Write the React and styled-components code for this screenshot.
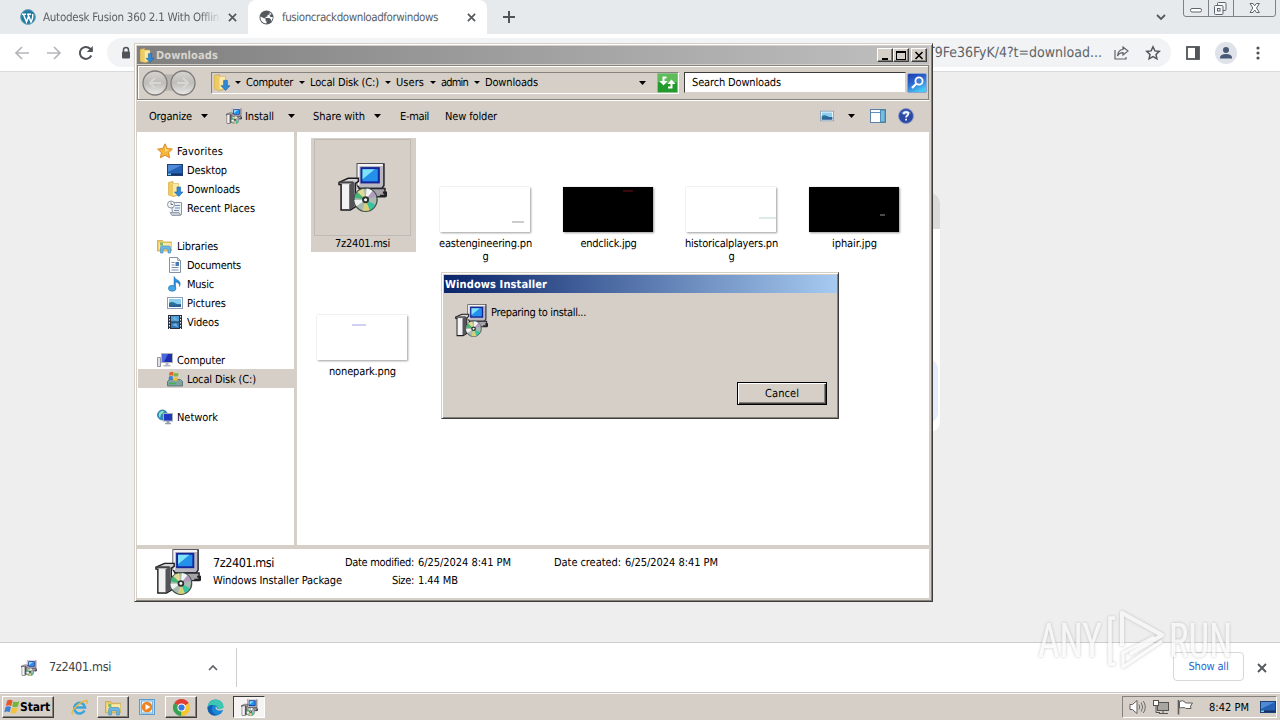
import { useLayoutEffect, useRef, useState } from "react";
import styled, { createGlobalStyle, css } from "styled-components";

const GlobalStyle = createGlobalStyle`
  * {
    box-sizing: border-box;
  }
  body {
    margin: 0;
    overflow: hidden;
    font-family: "DejaVu Sans Condensed", "DejaVu Sans", sans-serif;
    font-stretch: condensed;
    font-size: 11px;
    line-height: 13px;
    color: #000;
    text-rendering: geometricPrecision;
  }
  svg {
    display: block;
    flex: none;
  }
`;

// Tracks a label out (or in) until it is exactly w pixels wide
function Fit({ w, children }) {
  const ref = useRef(null);
  const [spacing, setSpacing] = useState(0);
  useLayoutEffect(() => {
    const natural = ref.current.getBoundingClientRect().width;
    setSpacing((w - natural) / children.length);
  }, []);
  return (
    <Word ref={ref} style={{ letterSpacing: spacing }}>
      {children}
    </Word>
  );
}

const navItems = [
  { icon: StarIcon, label: "Favorites", w: 46, top: true },
  { icon: DesktopIcon, label: "Desktop", w: 40 },
  { icon: DownloadsIcon, label: "Downloads", w: 53 },
  { icon: RecentIcon, label: "Recent Places", w: 68 },
  null,
  { icon: LibraryIcon, label: "Libraries", w: 41, top: true },
  { icon: DocumentIcon, label: "Documents", w: 54 },
  { icon: MusicIcon, label: "Music", w: 27 },
  { icon: PictureIcon, label: "Pictures", w: 39 },
  { icon: VideoIcon, label: "Videos", w: 32 },
  null,
  { icon: ComputerIcon, label: "Computer", w: 48, top: true },
  { icon: DiskIcon, label: "Local Disk (C:)", w: 69, selected: true },
  null,
  { icon: NetworkIcon, label: "Network", w: 41, top: true },
];

const crumbs = [
  ["Computer", 47],
  ["Local Disk (C:)", 69],
  ["Users", 28],
  ["admin", 27],
  ["Downloads", 53],
];

const files = [
  { lines: [["eastengineering.pn", 93], ["g", 6]], speck: "#ccc", x: 72, y: 34, w: 12 },
  { lines: [["endclick.jpg", 56]], dark: true, speck: "#3a080c", x: 60, y: 3, w: 10 },
  { lines: [["historicalplayers.pn", 93], ["g", 6]], speck: "#dcebe8", x: 73, y: 30, w: 17 },
  { lines: [["iphair.jpg", 45]], dark: true, speck: "#4a4a4a", x: 71, y: 27, w: 5 },
  { lines: [["nonepark.png", 67]], speck: "#d0d0f4", x: 35, y: 9, w: 14 },
];

export default function App() {
  return (
    <Screen>
      <GlobalStyle />
      <TabStrip />
      <BrowserBar />
      <PageArea>
        <Card>
          <CardHead />
          <CardHighlight />
        </Card>
      </PageArea>
      <DownloadShelf />
      <Taskbar />
      <Explorer />
      <InstallerDialog />
      <Watermark />
    </Screen>
  );
}

function TabStrip() {
  return (
    <Tabs>
      <Tab>
        <WordpressIcon />
        <TabTitle $w={178} $fade>
          <Fit w={176}>Autodesk Fusion 360 2.1 With Offlin</Fit>
        </TabTitle>
        <Cross size={9} />
      </Tab>
      <Tab $active>
        <GlobeIcon />
        <TabTitle $w={177}>
          <Fit w={156}>fusioncrackdownloadforwindows</Fit>
        </TabTitle>
        <Cross size={9} />
      </Tab>
      <NewTab>
        <svg width="12" height="12" viewBox="0 0 12 12" stroke="#505357" strokeWidth="2">
          <path d="M6 0v12M0 6h12" />
        </svg>
      </NewTab>
      <TabSearch>
        <svg width="10" height="7" viewBox="0 0 10 7" fill="none" stroke="#55595d" strokeWidth="1.8">
          <path d="M1 1l4 4 4-4" />
        </svg>
      </TabSearch>
      <WindowControls>
        <svg width="93" height="17" viewBox="0 0 93 17" fill="none" stroke="#7c8288">
          <path d="M.5 0v14q0 2.500 2.500 2.500h87q2.500 0 2.500-2.500V0M25.500 0v16M50.500 0v16" />
          <rect x="7.500" y="8.500" width="11" height="3.500" rx="1.500" fill="#fff" stroke="#5b6670" />
          <g fill="#f6f7f8" stroke="#5b6670">
            <rect x="34.500" y="2.500" width="8.500" height="8" rx="1" />
            <rect x="31.500" y="5.500" width="8.500" height="9" rx="1" />
            <rect x="34.500" y="8.500" width="2.500" height="2.500" />
          </g>
          <path d="M67 3.500h3l1.700 2.300 1.700-2.300h3L73.500 8l2.900 4.500h-3l-1.700-2.500-1.700 2.500h-3L69.800 8z" fill="#fff" stroke="#5b6670" />
        </svg>
      </WindowControls>
    </Tabs>
  );
}

function BrowserBar() {
  return (
    <Bar>
      <svg width="16" height="14" viewBox="0 0 16 14" fill="none" stroke="#b4b6b9" strokeWidth="1.700">
        <path d="M15 7H2M8 1L2 7l6 6" />
      </svg>
      <svg width="16" height="14" viewBox="0 0 16 14" fill="none" stroke="#b4b6b9" strokeWidth="1.700">
        <path d="M1 7h13M8 1l6 6-6 6" />
      </svg>
      <svg width="16" height="16" viewBox="0 0 16 16" fill="none" stroke="#505357" strokeWidth="2">
        <path d="M13.300 10.500A6 6 0 1 1 12.200 3.700L14 5.500" />
        <path d="M14.800 1v6h-6z" fill="#505357" stroke="none" />
      </svg>
      <Omnibox>
        <svg width="10" height="14" viewBox="0 0 10 14">
          <path d="M2.500 6V4a2.500 2.500 0 0 1 5 0v2" fill="none" stroke="#505357" strokeWidth="1.500" />
          <rect x="1" y="5.500" width="8" height="7" rx="1" fill="#505357" />
        </svg>
        <Url>
          <Fit w={175}>T9Fe36FyK/4?t=download...</Fit>
        </Url>
        <svg width="15" height="14" viewBox="0 0 15 14" fill="none" stroke="#606468" strokeWidth="1.200">
          <path d="M1 4v9h11v-2M9 1l5 4-5 4V6.700C6 6.700 4.500 8 3.500 10 3.800 6 5.500 3.800 9 3.500z" />
        </svg>
        <svg width="16" height="16" viewBox="0 0 16 16" fill="none" stroke="#55595d" strokeWidth="1.500">
          <path d="M8 1.800l1.900 4.100 4.400.5-3.300 3 .9 4.400L8 11.600l-3.900 2.200.9-4.400-3.300-3 4.400-.5z" />
        </svg>
      </Omnibox>
      <svg width="14" height="14" viewBox="0 0 14 14">
        <rect x="1" y="1" width="12" height="12" fill="none" stroke="#505357" strokeWidth="1.800" />
        <rect x="9" y="1" width="4" height="12" fill="#505357" />
      </svg>
      <svg width="22" height="22" viewBox="0 0 22 22">
        <circle cx="11" cy="11" r="11" fill="#dfe2e8" />
        <circle cx="11" cy="8" r="3" fill="#4a5878" />
        <path d="M5 16.500v-1.500q1-3 6-3t6 3v1.500z" fill="#4a5878" />
      </svg>
      <MoreButton>
        <svg width="4" height="14" viewBox="0 0 4 14" fill="#505357">
          <circle cx="2" cy="2" r="1.600" />
          <circle cx="2" cy="7" r="1.600" />
          <circle cx="2" cy="12" r="1.600" />
        </svg>
      </MoreButton>
    </Bar>
  );
}

function Explorer() {
  return (
    <ExplorerFrame>
      <TitleBar>
        <DownloadsIcon size={15} />
        <Title>
          <Fit w={62}>Downloads</Fit>
        </Title>
        <TitleButton>
          <svg width="10" height="9" viewBox="0 0 10 9">
            <path d="M2 7h6v2H2z" />
          </svg>
        </TitleButton>
        <TitleButton>
          <svg width="10" height="9" viewBox="0 0 10 9">
            <path fillRule="evenodd" d="M0 0h10v9H0zM1 2h8v6H1z" />
          </svg>
        </TitleButton>
        <TitleButton $gap={2}>
          <svg width="10" height="9" viewBox="0 0 10 9" stroke="#000" strokeWidth="1.600">
            <path d="M1.500 1l7 7M8.500 1l-7 7" />
          </svg>
        </TitleButton>
      </TitleBar>
      <AddressRow>
        <RoundButtons />
        <AddressBox>
          <DownloadsIcon size={17} />
          {crumbs.map(([name, w]) => (
            <Crumb key={name}>
              <Caret small />
              <Fit w={w}>{name}</Fit>
            </Crumb>
          ))}
          <AddressEnd>
            <Caret />
            <RefreshIcon />
          </AddressEnd>
        </AddressBox>
        <SearchBox>
          <Fit w={89}>Search Downloads</Fit>
        </SearchBox>
        <svg width="20" height="20" viewBox="0 0 20 20">
          <defs>
            <linearGradient id="find" x1="0" y1="0" x2=".5" y2="1">
              <stop offset="0" stopColor="#1c39ad" />
              <stop offset=".5" stopColor="#2c66cf" />
              <stop offset="1" stopColor="#48c8f4" />
            </linearGradient>
          </defs>
          <rect x=".5" y=".5" width="19" height="19" rx="1.500" fill="url(#find)" stroke="#8aa6d0" />
          <circle cx="12" cy="8" r="3.600" fill="#3f7bd8" stroke="#fff" strokeWidth="1.800" />
          <path d="M9.300 10.700L5 15" stroke="#fff" strokeWidth="2.200" />
        </svg>
      </AddressRow>
      <CommandBar>
        <Command>
          <Fit w={43}>Organize</Fit>
          <Caret />
        </Command>
        <Command $ml={18}>
          <MsiIcon size={16} />
          <InstallLabel>
            <Fit w={29}>Install</Fit>
          </InstallLabel>
          <Caret />
        </Command>
        <Command $ml={18}>
          <Fit w={52}>Share with</Fit>
          <Caret />
        </Command>
        <Command $ml={19}>
          <Fit w={29}>E-mail</Fit>
        </Command>
        <Command $ml={16}>
          <Fit w={52}>New folder</Fit>
        </Command>
        <ViewTools>
          <PictureIcon size={14} />
          <Caret />
          <svg width="16" height="14" viewBox="0 0 16 14">
            <rect x=".5" y=".5" width="15" height="13" fill="#fff" stroke="#5d82a8" />
            <path d="M1 3.500h10" stroke="#5f8fc4" />
            <rect x="10.500" y="1" width="4.500" height="12" fill="#74bfdf" stroke="#3e7ca8" strokeWidth=".8" />
          </svg>
          <svg width="16" height="16" viewBox="0 0 16 16">
            <circle cx="8" cy="8" r="7.500" fill="#2b49a6" stroke="#8d99c4" />
            <path d="M3 5q5-5 10 0-5 3-10 0z" fill="#7f9ce0" />
            <path d="M5.800 6.200q0-2.200 2.300-2.200t2.200 2q0 1-1.200 1.700-1 .6-1 1.800M8.100 10.800v1.700" fill="none" stroke="#fff" strokeWidth="1.700" />
          </svg>
        </ViewTools>
      </CommandBar>
      <Panes>
        <NavPane>
          {navItems.map((item, i) =>
            item ? (
              <NavRow key={i} $top={item.top} $selected={item.selected}>
                <item.icon size={16} />
                <Fit w={item.w}>{item.label}</Fit>
              </NavRow>
            ) : (
              <NavRow key={i} />
            )
          )}
        </NavPane>
        <FileGrid>
          <FileCell $selected>
            <IconFrame>
              <MsiIcon size={49} />
            </IconFrame>
            <Fit w={55}>7z2401.msi</Fit>
          </FileCell>
          {files.map((file) => (
            <FileCell key={file.lines[0][0]}>
              <ThumbSlot>
                <Thumb $dark={file.dark}>
                  <svg width="90" height="45">
                    <rect x={file.x} y={file.y} width={file.w} height="2" fill={file.speck} />
                  </svg>
                </Thumb>
              </ThumbSlot>
              {file.lines.map(([text, w]) => (
                <Fit key={text} w={w}>
                  {text}
                </Fit>
              ))}
            </FileCell>
          ))}
        </FileGrid>
      </Panes>
      <DetailsPane>
        <DetailsIcon>
          <MsiIcon size={46} />
        </DetailsIcon>
        <DetailsGrid>
          <FileName>
            <Fit w={61}>7z2401.msi</Fit>
          </FileName>
          <Key>
            <Fit w={69}>Date modified:</Fit>
          </Key>
          <Fit w={93}>6/25/2024 8:41 PM</Fit>
          <Key>
            <Fit w={67}>Date created:</Fit>
          </Key>
          <Fit w={93}>6/25/2024 8:41 PM</Fit>
          <Fit w={129}>Windows Installer Package</Fit>
          <Key>
            <Fit w={22}>Size:</Fit>
          </Key>
          <Fit w={40}>1.44 MB</Fit>
        </DetailsGrid>
      </DetailsPane>
    </ExplorerFrame>
  );
}

function InstallerDialog() {
  return (
    <DialogFrame>
      <DialogTitle>
        <Fit w={102}>Windows Installer</Fit>
      </DialogTitle>
      <DialogBody>
        <MsiIcon size={33} />
        <Fit w={95}>Preparing to install...</Fit>
      </DialogBody>
      <CancelButton>
        <Fit w={34}>Cancel</Fit>
      </CancelButton>
    </DialogFrame>
  );
}

function DownloadShelf() {
  return (
    <Shelf>
      <ShelfItem>
        <MsiIcon size={16} />
        <ShelfName>
          <Fit w={62}>7z2401.msi</Fit>
        </ShelfName>
        <svg width="10" height="7" viewBox="0 0 10 7" fill="none" stroke="#606468" strokeWidth="1.700">
          <path d="M1 6l4-4 4 4" />
        </svg>
      </ShelfItem>
      <ShowAll>
        <Fit w={40}>Show all</Fit>
      </ShowAll>
      <Cross size={10} />
    </Shelf>
  );
}

function Taskbar() {
  return (
    <Task>
      <StartButton>
        <WindowsFlag size={16} />
        <Fit w={30}>Start</Fit>
      </StartButton>
      <TaskButton $ml={9}>
        <svg width="17" height="17" viewBox="0 0 17 17" fill="none">
          <path d="M13.500 11.500A5.400 5.400 0 1 1 14 8.500H5" stroke="#3aa5dc" strokeWidth="2.600" />
          <path d="M1.500 15.500C-1 12 9 2.500 15.500 1.500c1.500.2 1 2 0 3.500" stroke="#e8b83c" strokeWidth="1.300" />
        </svg>
      </TaskButton>
      <TaskButton $ml={2} $raised>
        <LibraryIcon size={17} />
      </TaskButton>
      <TaskButton $ml={2}>
        <svg width="16" height="16" viewBox="0 0 16 16">
          <rect x=".5" y=".5" width="15" height="15" fill="#bfe0f5" stroke="#5b9acb" />
          <rect x="2.500" y="2" width="11" height="12" fill="#e4f3fb" stroke="#7ab4dc" />
          <circle cx="8" cy="8" r="5.200" fill="#f0821e" />
          <path d="M6.500 5l5 3-5 3z" fill="#fff" />
        </svg>
      </TaskButton>
      <TaskButton $ml={2} $raised>
        <ChromeIcon />
      </TaskButton>
      <TaskButton $ml={2}>
        <svg width="17" height="17" viewBox="0 0 17 17">
          <circle cx="8.500" cy="8.500" r="8" fill="#1a86d8" />
          <path d="M.5 8.500C1.500-1.500 16-1.500 16.500 7.500c0 3-4 4-6.500 2.500 1-1 .5-4-3-4-3 0-6 1-6.500 2.500z" fill="#3cc7b0" />
          <path d="M6.500 6.500c-3.500 3.500-1 9 4.500 9.500C4 18 0 13 .6 8.500 2 6 5 5.500 6.500 6.500z" fill="#155fae" />
          <path d="M9 7.500c-1.500 3 1.500 5 6.500 3.500l1 1 .5-3.500-3 1.500c-3 .8-4.500 0-4-1z" fill="#d5cec7" />
        </svg>
      </TaskButton>
      <TaskButton $ml={2} $pressed>
        <MsiIcon size={17} />
      </TaskButton>
      <Tray>
        <svg width="17" height="16" viewBox="0 0 17 16" fill="none" stroke="#6f6c69">
          <path d="M1 5.500h2.500L8 1.500v13l-4.500-4H1z" fill="#fff" stroke="#5f5d5b" />
          <path d="M10 5.500q1.500 2.500 0 5M12.200 3.500q3 4.500 0 9M14.300 2q4 6 0 12" />
        </svg>
        <svg width="17" height="16" viewBox="0 0 17 16" fill="#fff" stroke="#55524f">
          <rect x="4.500" y="3.500" width="11" height="8" fill="#a9a5a0" />
          <path d="M6 14.500h9M10 12v2" />
          <path d="M1.500 1v4h3v-4M3 5v8.500h4" fill="none" />
          <rect x=".5" y="1.500" width="5" height="5" />
        </svg>
        <svg width="17" height="16" viewBox="0 0 17 16" fill="#fff" stroke="#5f5d5b">
          <path d="M1.500 1v14.500" strokeWidth="1.600" />
          <path d="M2.500 2.500q3-1.500 5 0 0 1.500 2 1.500h6l-2 3 .5 2.500h-5q-.5-1.500-6.500-.5z" />
        </svg>
        <Clock>
          <Fit w={40}>8:42 PM</Fit>
        </Clock>
        <DesktopIcon size={16} />
      </Tray>
    </Task>
  );
}

function Watermark() {
  return (
    <Brand>
      <svg width="200" height="66" viewBox="0 0 200 66">
        <defs>
          <filter id="soft" x="-10%" y="-10%" width="120%" height="120%">
            <feDropShadow dx="0" dy="0" stdDeviation="1.600" floodColor="#777" floodOpacity=".65" />
          </filter>
        </defs>
        <g filter="url(#soft)" fill="#fff" fillOpacity=".85" fontFamily="Roboto, sans-serif" fontSize="48">
          <text x="3" y="50" textLength="64" lengthAdjust="spacingAndGlyphs">
            ANY
          </text>
          <text x="134" y="50" textLength="63" lengthAdjust="spacingAndGlyphs">
            RUN
          </text>
          <g fill="none" stroke="#fff" strokeOpacity=".85" strokeWidth="4" strokeLinejoin="round">
            <path d="M87 39V6l40 22-32 19" />
            <path d="M80 11h-5v46h5" strokeWidth="3.500" />
            <path d="M127 34L88 60V46l31-16" strokeWidth="3" />
          </g>
        </g>
      </svg>
    </Brand>
  );
}

/* ---------- icons ---------- */

function Cross({ size }) {
  return (
    <svg width={size} height={size} viewBox="0 0 10 10" stroke="#55595d" strokeWidth="1.900">
      <path d="M1 1l8 8M9 1L1 9" />
    </svg>
  );
}

function Caret({ small }) {
  return (
    <svg width={small ? 6 : 7} height={small ? 3 : 4} viewBox="0 0 8 4" preserveAspectRatio="none">
      <path d="M0 0h8L4 4z" />
    </svg>
  );
}

function RefreshIcon() {
  return (
    <svg width="21" height="20" viewBox="0 0 21 20">
      <rect x=".5" y=".5" width="20" height="19" rx="1" fill="#249a2c" stroke="#8cc08c" />
      <path d="M1 1h19v8Q10 12 1 9z" fill="#5dbb5a" />
      <path d="M9.500 4.500H6.500V9" fill="none" stroke="#fff" strokeWidth="2" />
      <path d="M2.500 8h8l-4 4.500z" fill="#fff" />
      <path d="M11 14.500h3.500V10" fill="none" stroke="#fff" strokeWidth="2" />
      <path d="M10.500 11h8l-4-4.500z" fill="#fff" />
    </svg>
  );
}

function WordpressIcon() {
  return (
    <svg width="16" height="16" viewBox="0 0 16 16">
      <circle cx="8" cy="8" r="7.400" fill="#2379a0" stroke="#6aa5c0" />
      <path d="M2 5.200h4M7 5.200h4M3.500 5.500l3 7.500 2-5.500M8 5.500l3 7.500q2.500-5 1.500-8" fill="none" stroke="#fff" strokeWidth="1.500" />
    </svg>
  );
}

function GlobeIcon() {
  return (
    <svg width="15" height="15" viewBox="0 0 15 15">
      <circle cx="7.500" cy="7.500" r="7" fill="#55595d" />
      <path d="M1.500 6.500l3 1.500 2 .5v2l1 1v2C4 13.500 1 10.500 1.500 6.500zM8.500 1.600l2.500.6-.5 2.300-2 .5v1.500L6.500 7v1h4l1.500 1.500v2q2-2 1.700-4.500L11.500 7l-1-1.500L12.500 4Q11 2 8.500 1.600z" fill="#fff" />
    </svg>
  );
}

function MsiIcon({ size }) {
  return (
    <svg width={size} height={size} viewBox="0 0 48 48">
      <path d="M19 1h26v21l-2 3H21l-2-3z" fill="#b9b7c0" stroke="#25242c" strokeWidth="1.500" />
      <path d="M19 1h25v2H21v19h-2z" fill="#f4f4f6" />
      <path d="M22 4h19v16H22z" fill="#16269a" />
      <path d="M24 6h15v12H24z" fill="#2390ec" />
      <path d="M24 6h12L24 16z" fill="#7fe2f8" />
      <path d="M21 25h25v8H24z" fill="#a5a2a8" stroke="#25242c" strokeWidth="1.500" />
      <path d="M44 29h3v3h-6" fill="none" stroke="#222" strokeWidth="2" />
      <path d="M1 19l9-4h10v3l-3 2v23l-5 3H3V21H1z" fill="#d6d3d6" stroke="#1d1c20" strokeWidth="1.500" />
      <path d="M4 21h7v24H4z" fill="#f3f2f2" />
      <path d="M11 21l5-3v25l-5 3z" fill="#55535a" />
      <path d="M1 19h14" stroke="#444" strokeWidth="2" />
      <circle cx="27" cy="36" r="11.300" fill="#a9bab0" stroke="#3f5247" strokeWidth="1.300" />
      <path d="M27 36l-8-7.500a11 11 0 0 1 6-3.200z" fill="#e3da92" />
      <path d="M27 36L16.200 34a11 11 0 0 1 2.800-5.500z" fill="#45b678" />
      <path d="M27 36l1-11a11 11 0 0 1 6 2.500z" fill="#f2f5f4" />
      <path d="M27 36l7-8.500a11 11 0 0 1 3.500 5z" fill="#b39abf" />
      <path d="M27 36l9.500 5a11 11 0 0 1-5.500 5.200z" fill="#38c2a0" />
      <path d="M27 36l4 10.200a11 11 0 0 1-7 .3z" fill="#d9d07a" />
      <path d="M27 36l-9 6.300a11 11 0 0 1-2-6z" fill="#f0f2f2" />
      <circle cx="27" cy="36" r="3.400" fill="#2d3430" />
      <circle cx="27" cy="36" r="1.500" fill="#fff" />
    </svg>
  );
}

function StarIcon({ size }) {
  return (
    <svg width={size} height={size} viewBox="0 0 16 16">
      <path d="M8 .8l2.200 4.700 5.200.6-3.800 3.500 1 5.200L8 12.200l-4.600 2.600 1-5.200L.6 6.100l5.200-.6z" fill="#f9b53a" stroke="#d98a25" />
      <path d="M8 3l1.400 3.400 3 .4L8 9z" fill="#fddc85" />
    </svg>
  );
}

function DesktopIcon({ size }) {
  return (
    <svg width={size} height={size} viewBox="0 0 16 16">
      <rect x=".5" y="2.500" width="15" height="11" fill="#2460b4" stroke="#1c3f78" />
      <path d="M1 3h14L1 10z" fill="#4f8ad6" />
      <path d="M1 11.500h14V13H1z" fill="#16315f" />
      <path d="M1 11.500h3V13H1z" fill="#6fd0e8" />
    </svg>
  );
}

function DownloadsIcon({ size }) {
  return (
    <svg width={size} height={size} viewBox="0 0 16 16">
      <path d="M1.500 1.500L6 .5v2h5.500V14l-5 1.500-5-1.500z" fill="#f4d777" stroke="#cda548" strokeWidth=".8" />
      <path d="M6 2.500h5.500V14H6z" fill="#fbe9a5" />
      <path d="M1.500 1.500L6 3v12.300L1.500 14z" fill="#eecb62" />
      <path d="M10 6h3.500v5H16l-4.200 4.500L7.500 11H10z" fill="#2f8ad8" stroke="#1c62ac" strokeWidth=".6" />
    </svg>
  );
}

function RecentIcon({ size }) {
  return (
    <svg width={size} height={size} viewBox="0 0 16 16">
      <path d="M4.500 2.500h10v12h-9z" fill="#eef1f4" stroke="#8c96a2" />
      <path d="M3 12.500h9l1.500 3H5z" fill="#c6ccd4" stroke="#848e9a" strokeWidth=".8" />
      <path d="M8 5.500h5M8 8h5M7 10.500h5" stroke="#6d90b8" />
      <circle cx="4" cy="4.500" r="3.500" fill="#f4f6f8" stroke="#8c96a2" />
      <path d="M4 2.500v2h2" stroke="#555" fill="none" strokeWidth=".8" />
    </svg>
  );
}

function LibraryIcon({ size }) {
  return (
    <svg width={size} height={size} viewBox="0 0 16 16">
      <path d="M.5 2.500h5l1 1.500h8v9H.5z" fill="#f0cf6c" stroke="#c9a347" strokeWidth=".8" />
      <path d="M2 5h12.500v6H2z" fill="#fbe8a2" />
      <path d="M3 4.500h3v3H3z" fill="#80b96a" />
      <path d="M3.500 15V9.500q0-1.500 1.500-1.500h7q1.500 0 1.500 1.500V15H11v-4H6v4z" fill="#6bb8e4" stroke="#4a93c0" strokeWidth=".7" />
    </svg>
  );
}

function DocumentIcon({ size }) {
  return (
    <svg width={size} height={size} viewBox="0 0 16 16">
      <path d="M2.500.5h8l3 3v12h-11z" fill="#fff" stroke="#8493a4" />
      <path d="M10.500.5v3h3z" fill="#cfdae6" stroke="#8493a4" strokeWidth=".7" />
      <path d="M4.500 5.500h3M4.500 8h3M4.500 10.500h7M4.500 13h7" stroke="#7391b4" />
      <path d="M8.500 5h3.500v4H8.500z" fill="#4a78b4" />
    </svg>
  );
}

function MusicIcon({ size }) {
  return (
    <svg width={size} height={size} viewBox="0 0 16 16">
      <path d="M7 .5q1 2.500 4 3.700 3.500 2 1.500 6.300.5-3.500-4-4.500v6.500H7z" fill="#2f8fd6" stroke="#1e6fb4" strokeWidth=".5" />
      <ellipse cx="5.200" cy="12.300" rx="3.800" ry="3" fill="#43a5e4" stroke="#1e6fb4" strokeWidth=".6" />
    </svg>
  );
}

function PictureIcon({ size }) {
  return (
    <svg width={size} height={size} viewBox="0 0 16 16">
      <rect x=".5" y="2.500" width="15" height="11" fill="#fff" stroke="#8aa0b6" />
      <rect x="2" y="4" width="12" height="8" fill="#8ccdf0" />
      <path d="M2 8q3-2 6 0t6 1v3H2z" fill="#2a7391" />
      <path d="M2 10.500l12-1V12H2z" fill="#2f5c9c" />
    </svg>
  );
}

function VideoIcon({ size }) {
  return (
    <svg width={size} height={size} viewBox="0 0 16 16">
      <rect x="1" y="1" width="14" height="14" fill="#29323c" />
      <path d="M4 2h8v5.500H4z" fill="#4ea0d8" />
      <path d="M4 8.500h8V14H4z" fill="#3378b8" />
      <path d="M5 5l3-2 3 4zM5 11l4-2 2 4z" fill="#6db4de" />
      <path d="M2.500 2v13M13.500 2v13" stroke="#f2f2f2" strokeDasharray="1.500 1.500" />
    </svg>
  );
}

function ComputerIcon({ size }) {
  return (
    <svg width={size} height={size} viewBox="0 0 16 16">
      <path d="M.5 5.500h3v9h-3z" fill="#dfe2e6" stroke="#7a828c" strokeWidth=".8" />
      <rect x="4.500" y="1.500" width="11" height="9" fill="#1e2fb0" stroke="#b0b4bc" />
      <path d="M5 2h6l-4 8H5z" fill="#4a66e0" />
      <path d="M8.500 11h3v2h2v1.500h-7V13h2z" fill="#b4b8c0" />
    </svg>
  );
}

function DiskIcon({ size }) {
  return (
    <svg width={size} height={size} viewBox="0 0 16 16">
      <path d="M.5 10.500l2-2h11l2 2v4.500H.5z" fill="#7fa39e" stroke="#4c6a6c" strokeWidth=".8" />
      <path d="M2 12.500h7" stroke="#3fb552" strokeWidth="1.500" />
      <path d="M2.500 1.500q2.500-1.500 4 0L6 4.800q-2-1-4 0z" fill="#e2602c" />
      <path d="M7 1.800q2 1 4.500 0L11 5q-2 1-4.500 0z" fill="#79b83c" />
      <path d="M2 5.500q2-1 4 0L5.500 9q-2-1-4 0z" fill="#3f83d0" />
      <path d="M6.500 6q2 1 4.500 0l-.5 3.200q-2 1-4.500 0z" fill="#f2bf3a" />
    </svg>
  );
}

function NetworkIcon({ size }) {
  return (
    <svg width={size} height={size} viewBox="0 0 16 16">
      <circle cx="5.500" cy="6" r="5" fill="#2f8cb8" stroke="#2a6f96" strokeWidth=".8" />
      <path d="M2 4q3-3 5-2-1 3-3 3.500L3 9Q1 7 2 4z" fill="#8fe0c8" />
      <rect x="6.500" y="4.500" width="9" height="7.500" fill="#2338c0" stroke="#a8aeb8" />
      <path d="M9.500 12h3v2h1.500v1.200h-6V14h1.500z" fill="#9a9fb0" />
    </svg>
  );
}

function WindowsFlag({ size }) {
  return (
    <svg width={size} height={size} viewBox="0 0 15 15">
      <path d="M3 1.500q2.500-1.800 5 0L6.800 6.500q-2.300-1.500-5 0z" fill="#e2582a" />
      <path d="M8.800 2q2.500 1.600 5.500 0L13 7q-2.800 1.500-5.300 0z" fill="#74b53a" />
      <path d="M1.500 7.500q2.500-1.600 5 0l-1.200 5q-2.300-1.500-5 0z" fill="#3c80d4" />
      <path d="M7.400 8q2.500 1.500 5.400 0l-1.300 5q-2.700 1.500-5.300 0z" fill="#f4c238" />
    </svg>
  );
}

function ChromeIcon() {
  return (
    <svg width="17" height="17" viewBox="0 0 18 18">
      <path d="M9 9L1.200 4.500a9 9 0 0 1 15.600 0z" fill="#df4033" />
      <path d="M9 9v9A9 9 0 0 1 1.200 4.500z" fill="#35a34f" />
      <path d="M9 9l7.800-4.500A9 9 0 0 1 9 18z" fill="#f8c52c" />
      <circle cx="9" cy="9" r="4.300" fill="#fff" />
      <circle cx="9" cy="9" r="3.300" fill="#3a78e0" />
    </svg>
  );
}

function RoundButtons() {
  return (
    <svg width="56" height="28" viewBox="0 0 56 28">
      <defs>
        <linearGradient id="orb" x1="0" y1="0" x2="0" y2="1">
          <stop offset="0" stopColor="#d6d4d1" />
          <stop offset=".5" stopColor="#bfbdba" />
          <stop offset="1" stopColor="#eceae8" />
        </linearGradient>
      </defs>
      <path d="M14 3q14 5 28 0v21q-14-5-28 0z" fill="#b6b3af" />
      <circle cx="14" cy="14" r="12" fill="url(#orb)" stroke="#7e7c7a" strokeWidth="1.300" />
      <circle cx="42" cy="14" r="12" fill="url(#orb)" stroke="#7e7c7a" strokeWidth="1.300" />
      <g fill="none" stroke="#d8d6d3" strokeWidth="2">
        <path d="M20 14H9M14 9l-5 5 5 5M36 14h11M42 9l5 5-5 5" />
      </g>
    </svg>
  );
}

/* ---------- styles ---------- */

const face = "#d5cfc8";

const Word = styled.span`
  display: inline-block;
  flex: none;
  white-space: pre;
`;

const Screen = styled.div`
  position: relative;
  display: flex;
  flex-direction: column;
  width: 1280px;
  height: 720px;
  overflow: hidden;
  background-color: #eee;
`;

const Tabs = styled.div`
  display: flex;
  height: 34px;
  background-color: #e7eaed;
`;

const Tab = styled.div`
  display: flex;
  align-items: center;
  gap: ${({ $active }) => ($active ? 8 : 7)}px;
  width: ${({ $active }) => ($active ? 239 : 248)}px;
  padding-left: ${({ $active }) => ($active ? 11 : 20)}px;
  border-radius: 8px 8px 0 0;
  background-color: ${({ $active }) => ($active ? "#fff" : "transparent")};
  color: #5a5e62;
`;

const TabTitle = styled.div`
  width: ${({ $w }) => $w}px;
  overflow: hidden;
  font-size: 11.5px;
  ${({ $fade }) =>
    $fade &&
    css`
      mask-image: linear-gradient(90deg, #000 88%, transparent);
    `}
`;

const NewTab = styled.div`
  display: flex;
  align-items: center;
  margin-left: 16px;
`;

const TabSearch = styled.div`
  display: flex;
  align-items: center;
  margin-left: auto;
  margin-right: 17px;
`;

const WindowControls = styled.div`
  margin-right: 4px;
`;

const Bar = styled.div`
  display: flex;
  align-items: center;
  gap: 15px;
  height: 38px;
  padding: 0 20px 0 14px;
  border-bottom: 1px solid #d9dadc;
  background-color: #fff;

  & > svg:nth-child(-n + 3) {
    margin-right: 1px;
  }
`;

const Omnibox = styled.div`
  display: flex;
  flex: 1;
  align-items: center;
  gap: 16px;
  height: 29px;
  margin-left: -3px;
  padding: 0 10px 0 14px;
  border-radius: 15px;
  background-color: #f1f3f4;
`;

const Url = styled.div`
  margin-left: auto;
  margin-right: -4px;
  font-size: 14px;
  line-height: 18px;
  color: #606468;
`;

const MoreButton = styled.div`
  margin-left: 4px;
`;

const PageArea = styled.div`
  display: flex;
  justify-content: center;
  align-items: flex-start;
  height: 570px;
  padding-top: 121px;
  background-color: #eee;
`;

const Card = styled.div`
  display: flex;
  flex-direction: column;
  width: 600px;
  height: 239px;
  border-radius: 10px;
  overflow: hidden;
  background-color: #fff;
`;

const CardHead = styled.div`
  height: 36px;
  background-color: #dadada;
`;

const CardHighlight = styled.div`
  height: 66px;
  margin: auto 2px 8px;
  border-radius: 12px;
  background-color: #e3ecfd;
`;

const Shelf = styled.div`
  display: flex;
  align-items: center;
  height: 51px;
  padding-right: 13px;
  border-top: 1px solid #cdced0;
  border-bottom: 1px solid #c8c6c4;
  background-color: #fff;
`;

const ShelfItem = styled.div`
  display: flex;
  align-items: center;
  width: 237px;
  height: 39px;
  padding: 0 18px 0 21px;
  border-right: 1px solid #cdced0;
`;

const ShelfName = styled.div`
  flex: 1;
  margin-left: 12px;
  padding-bottom: 2px;
  font-size: 12.5px;
  color: #3c4043;
`;

const ShowAll = styled.div`
  display: flex;
  align-items: center;
  justify-content: center;
  width: 71px;
  height: 29px;
  margin: 0 13px 2px auto;
  border: 1px solid #d5d7da;
  border-radius: 4px;
  color: #2468d0;
`;

const Task = styled.div`
  display: flex;
  align-items: flex-start;
  height: 27px;
  padding: 2px 3px 0 2px;
  border-top: 1px solid #fbfaf8;
  background-color: ${face};
`;

const raised = css`
  border: 1px solid;
  border-color: #fff #3f3d3b #3f3d3b #fff;
  box-shadow: inset -1px -1px 0 #85817c;
`;

const StartButton = styled.div`
  display: flex;
  align-items: center;
  gap: 0;
  width: 52px;
  height: 22px;
  padding-left: 1px;
  font-size: 12px;
  font-weight: bold;
  ${raised}
`;

const TaskButton = styled.div`
  display: flex;
  align-items: center;
  justify-content: center;
  width: 32px;
  height: 22px;
  margin-left: ${({ $ml }) => $ml}px;
  ${({ $raised }) => $raised && raised}
  ${({ $pressed }) =>
    $pressed &&
    css`
      border: 1px solid;
      border-color: #3f3d3b #fff #fff #3f3d3b;
      background-color: #f6f4f2;
    `}
`;

const Tray = styled.div`
  display: flex;
  align-items: center;
  gap: 7px;
  width: 155px;
  height: 22px;
  margin-left: auto;
  padding-left: 6px;
  border: 1px solid;
  border-color: #85817c #fff #fff #85817c;
`;

const Clock = styled.div`
  margin-left: 8px;
  margin-right: 4px;
`;

const ExplorerFrame = styled.div`
  position: absolute;
  left: 134px;
  top: 43px;
  display: flex;
  flex-direction: column;
  width: 799px;
  height: 559px;
  padding: 2px 3px 2px 1px;
  border: 1px solid;
  border-color: ${face} #3f3d3b #3f3d3b ${face};
  background-color: ${face};
  box-shadow: inset 1px 1px 0 #fff, inset -1px -1px 0 #85817c;
`;

const TitleBar = styled.div`
  display: flex;
  align-items: center;
  height: 18px;
  margin-left: 1px;
  padding: 0 2px 0 2px;
  background: linear-gradient(90deg, #808080, #c0c0c0);
`;

const Title = styled.div`
  flex: 1;
  margin-left: 2px;
  font-weight: bold;
  color: #d8d4cd;
`;

const TitleButton = styled.div`
  display: flex;
  align-items: center;
  justify-content: center;
  width: 16px;
  height: 14px;
  margin-left: ${({ $gap }) => $gap || 0}px;
  background-color: ${face};
  ${raised}
`;

const AddressRow = styled.div`
  display: flex;
  align-items: center;
  height: 35px;
  margin: 1px 0 0 1px;
  padding: 0 1px 0 3px;
  border: 1px solid #85817c;
  box-shadow: 0 1px 0 #fff, inset 1px 1px 0 #fff;
`;

const AddressBox = styled.div`
  display: flex;
  align-items: center;
  width: 468px;
  height: 22px;
  margin-left: 14px;
  padding-left: 1px;
  border: 1px solid;
  border-color: #85817c #fff #fff #85817c;
`;

const Crumb = styled.div`
  display: flex;
  align-items: center;
  gap: 5px;
  margin-left: 6px;

  &:nth-child(2) {
    margin-left: 5px;
  }
`;

const AddressEnd = styled.div`
  display: flex;
  align-items: center;
  gap: 11px;
  margin-left: auto;
`;

const SearchBox = styled.div`
  display: flex;
  align-items: center;
  width: 222px;
  height: 21px;
  margin-left: 5px;
  margin-right: auto;
  padding-left: 7px;
  border: 1px solid;
  border-color: #3f3d3b ${face} ${face} #3f3d3b;
  background-color: #fff;
`;

const CommandBar = styled.div`
  display: flex;
  align-items: center;
  height: 32px;
  padding: 0 15px 0 13px;
`;

const Command = styled.div`
  display: flex;
  align-items: center;
  gap: 9px;
  margin-left: ${({ $ml }) => $ml || 0}px;
`;

const InstallLabel = styled.div`
  margin-left: -6px;
  margin-right: 5px;
`;

const ViewTools = styled.div`
  display: flex;
  align-items: center;
  gap: 12px;
  margin-left: auto;

  & > svg:nth-child(2) {
    margin: 0 3px 0 2px;
  }
`;

const Panes = styled.div`
  display: flex;
  height: 413px;
  margin-left: 1px;
`;

const NavPane = styled.div`
  width: 160px;
  padding-top: 9px;
  border-right: 3px solid ${face};
  background-color: #fff;
`;

const NavRow = styled.div`
  display: flex;
  align-items: center;
  gap: 4px;
  height: 19px;
  margin-left: 1px;
  padding-top: 1px;
  padding-left: ${({ $top }) => ($top ? 19 : 29)}px;
  background-color: ${({ $selected }) => ($selected ? face : "transparent")};
`;

const FileGrid = styled.div`
  flex: 1;
  display: grid;
  grid-template-columns: repeat(5, 105px);
  grid-auto-rows: 114px;
  gap: 14px 18px;
  padding: 6px 0 0 14px;
  background-color: #fff;
`;

const FileCell = styled.div`
  display: flex;
  flex-direction: column;
  align-items: center;
  padding: 1px 2px 0 0;
  background-color: ${({ $selected }) => ($selected ? face : "transparent")};
`;

const IconFrame = styled.div`
  display: flex;
  flex: none;
  align-items: center;
  justify-content: center;
  width: 97px;
  height: 97px;
  margin-bottom: 1px;
  border: 1px solid #bfbab4;
`;

const ThumbSlot = styled.div`
  display: flex;
  flex: none;
  align-items: flex-end;
  height: 93px;
  margin-bottom: 5px;
`;

const Thumb = styled.div`
  width: 90px;
  height: 45px;
  margin-right: 1px;
  background-color: ${({ $dark }) => ($dark ? "#000" : "#fff")};
  box-shadow: 0 0 1px #ccc, 1px 1px 2px #999;
`;

const DetailsPane = styled.div`
  display: flex;
  height: 49px;
  margin: 4px 0 0 1px;
  background-color: #fff;
`;

const DetailsIcon = styled.div`
  width: 76px;
  padding-left: 18px;
`;

const DetailsGrid = styled.div`
  display: grid;
  grid-template-columns: 131px 74px 136px 71px 100px;
  grid-auto-rows: 18px;
  align-items: center;
  justify-items: start;
  padding-top: 4px;
`;

const FileName = styled.div`
  font-size: 12.5px;
`;

const Key = styled.div`
  justify-self: end;
  padding-right: 4px;
`;

const DialogFrame = styled.div`
  position: absolute;
  left: 441px;
  top: 272px;
  display: flex;
  flex-direction: column;
  width: 398px;
  height: 147px;
  padding: 2px 1px 0 1px;
  border: 1px solid;
  border-color: ${face} #3f3d3b #3f3d3b ${face};
  background-color: ${face};
  box-shadow: inset 1px 1px 0 #fff, inset -1px -1px 0 #85817c;
`;

const DialogTitle = styled.div`
  height: 18px;
  margin-left: 1px;
  padding: 3px 0 0 1px;
  background: linear-gradient(90deg, #0a246a, #a6caf0);
  font-weight: bold;
  color: #fff;
`;

const DialogBody = styled.div`
  display: flex;
  gap: 3px;
  padding: 11px 0 0 12px;
  line-height: 17px;
`;

const CancelButton = styled.div`
  display: flex;
  align-items: center;
  justify-content: center;
  align-self: flex-end;
  width: 90px;
  height: 23px;
  margin: auto 10px 13px 0;
  border: 1px solid #000;
  box-shadow: inset 1px 1px 0 #fff, inset -1px -1px 0 #3f3d3b, inset -2px -2px 0 #85817c;
`;

const Brand = styled.div`
  position: absolute;
  left: 1035px;
  top: 607px;
  opacity: 0.8;
`;
